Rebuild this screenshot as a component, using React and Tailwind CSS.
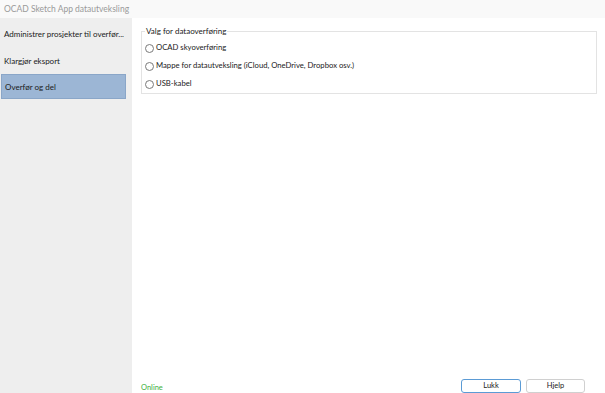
export default function App() {
  const options = [
    "OCAD skyoverføring",
    "Mappe for datautveksling (iCloud, OneDrive, Dropbox osv.)",
    "USB-kabel",
  ];

  return (
    <div className="w-[605px] h-[393px] overflow-hidden flex flex-col bg-white text-[8px] text-[#1a1a1a]" style={{ fontFamily: 'Lato, "Liberation Sans", sans-serif' }}>
      <div className="h-[18px] shrink-0 flex items-center px-[4px] bg-[#f9f9f9] text-[#9a9a9a] text-[8.5px]">
        OCAD Sketch App datautveksling
      </div>

      <div className="flex-1 flex min-h-0">
        <aside className="w-[132px] shrink-0 bg-[#eeeeee] pt-[3px] flex flex-col">
          <div className="h-[26px] flex items-center px-[4px] whitespace-nowrap">Administrer prosjekter til overfør...</div>
          <div className="h-[27px] flex items-center px-[4px]">Klargjør eksport</div>
          <div className="ml-[1px] w-[125px] h-[25px] flex items-center px-[3px] bg-[#9cb6d5] border border-[#8aa6c8]">Overfør og del</div>
        </aside>

        <main className="flex-1 flex flex-col pl-[9px] pr-[8px] pt-[9px]">
          <fieldset className="border border-[#e3e3e3] pl-[3px] h-[67px]">
            <legend className="px-[1px] leading-[9px]">Valg for dataoverføring</legend>
            <div className="flex flex-col gap-[6px] pt-[6px] text-[7.7px]">
              {options.map((o) => (
                <label key={o} className="flex items-center gap-[2px] h-[12px] leading-none">
                  <span className="w-[9px] h-[9px] shrink-0 rounded-full border border-[#7a7a7a] bg-white" />
                  <span>{o}</span>
                </label>
              ))}
            </div>
          </fieldset>

          <div className="mt-auto flex items-end justify-between">
            <span className="text-[#40b040] text-[7.5px] leading-[8px] mb-[1px]">Online</span>
            <div className="flex gap-[5px] mr-[12px]">
              <button className="w-[60px] h-[14px] rounded-[3px] border border-[#5b9bd5] bg-white text-[7.5px]">Lukk</button>
              <button className="w-[59px] h-[14px] rounded-[3px] border border-[#d0d0d0] bg-white text-[7.5px]">Hjelp</button>
            </div>
          </div>
        </main>
      </div>
    </div>
  );
}
